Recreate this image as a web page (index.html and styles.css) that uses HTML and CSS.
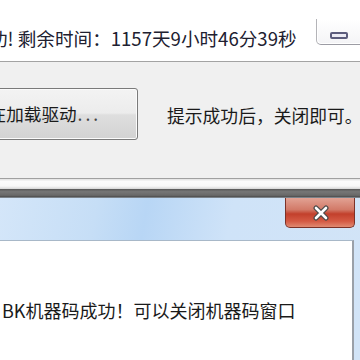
FILE: index.html
```html
<!DOCTYPE html>
<html lang="zh-CN">
<head>
<meta charset="utf-8">
<title>驱动加载</title>
<link rel="stylesheet" href="styles.css">
</head>
<body>
<div class="screen">
  <div class="top">
    <div class="countdown">功! 剩余时间：1157天9小时46分39秒</div>
    <div class="min-btn"><span class="min-glyph"></span></div>
  </div>
  <div class="main">
    <div class="load-btn">正在加载驱动<span class="dots">...</span></div>
    <div class="hint">提示成功后，关闭即可。</div>
  </div>
  <div class="frame-edge">
    <div class="edge-line"></div>
    <div class="edge-light"></div>
    <div class="edge-dark"></div>
  </div>
  <div class="dialog">
    <div class="dialog-title">
      <div class="close-btn">
        <svg width="20" height="16" viewBox="0 0 20 16">
          <path d="M5 3 L15 13 M15 3 L5 13" stroke="#4a4a4a" stroke-width="5" stroke-linecap="round"/>
          <path d="M5 3 L15 13 M15 3 L5 13" stroke="#ffffff" stroke-width="2.6" stroke-linecap="round"/>
        </svg>
      </div>
    </div>
    <div class="dialog-body">
      <div class="message">BK机器码成功！可以关闭机器码窗口</div>
    </div>
  </div>
</div>
</body>
</html>
```

FILE: styles.css
```css
html, body {
  margin: 0;
  padding: 0;
  background: #ffffff;
}

.screen {
  width: 360px;
  height: 360px;
  overflow: hidden;
  font-family: "Noto Sans CJK SC", "Microsoft YaHei", sans-serif;
  color: #1c1c1c;
}

.top {
  height: 61px;
  background: #ffffff;
  border-bottom: 1px solid #a3a3a3;
  display: flex;
  align-items: flex-start;
  overflow: hidden;
}

.countdown {
  flex-shrink: 0;
  margin-left: -11px;
  margin-top: 26px;
  font-size: 18.6px;
  line-height: 24px;
  white-space: nowrap;
  color: #202030;
}

.min-btn {
  flex-shrink: 0;
  margin-left: auto;
  margin-right: -10px;
  margin-top: 19px;
  width: 54px;
  height: 26px;
  box-sizing: border-box;
  border-left: 1px solid #b4b4b8;
  border-bottom: 1px solid #9c9ca4;
  border-bottom-left-radius: 5px;
  background: linear-gradient(#ffffff, #f4f4f6);
  box-shadow: inset 1px -1px 0 #ffffff;
  display: flex;
  padding-left: 13px;
  padding-top: 13px;
}

.min-glyph {
  display: block;
  width: 18px;
  height: 7px;
  box-sizing: border-box;
  border: 2px solid #5c5c7c;
  border-radius: 2px;
  background: #ecebf4;
}

.main {
  height: 116px;
  background: #f0f0f0;
  box-sizing: border-box;
  padding-top: 26px;
  display: flex;
  align-items: flex-start;
  overflow: hidden;
}

.load-btn {
  flex-shrink: 0;
  margin-left: -60px;
  width: 198px;
  height: 52px;
  box-sizing: border-box;
  border: 1px solid #7a7a7a;
  border-radius: 3px;
  background: linear-gradient(#f3f3f3 0%, #ececec 48%, #dedede 52%, #d2d2d2 100%);
  box-shadow: inset 0 0 0 1px #fbfbfb;
  font-size: 17.6px;
  line-height: 50px;
  padding-left: 30px;
  white-space: nowrap;
  color: #1a1a1a;
}

.dots {
  letter-spacing: 3px;
  margin-left: 1px;
  color: #444444;
}

.hint {
  flex-shrink: 0;
  margin-left: 29px;
  margin-top: 15px;
  font-size: 17.8px;
  line-height: 24px;
  white-space: nowrap;
  color: #1a1a1a;
}

.frame-edge {
  display: flex;
  flex-direction: column;
}

.edge-line {
  height: 1px;
  background: #a0a0a0;
}

.edge-light {
  height: 10px;
  background: linear-gradient(#e2e2e2 0%, #fbfbfb 25%, #f8f8f8 70%, #d6d6d6 100%);
}

.edge-dark {
  height: 9px;
  background: linear-gradient(#585858 0%, #767676 30%, #686868 70%, #4a4a4a 90%, #b8c8d8 100%);
}

.dialog {
  background: linear-gradient(100deg, #d4e6f9 0%, #c6def6 25%, #b8d6f5 38%, #cfe3f8 60%, #d2e4f7 100%);
}

.dialog-title {
  height: 42px;
  display: flex;
  justify-content: flex-end;
  align-items: flex-start;
  padding-right: 5px;
}

.close-btn {
  width: 70px;
  height: 30px;
  box-sizing: border-box;
  border: 1px solid #7c3228;
  border-top: none;
  border-radius: 0 0 5px 5px;
  background: linear-gradient(#e2a294 0%, #d27a68 40%, #c2402c 55%, #d45a44 80%, #e08a72 100%);
  display: flex;
  align-items: center;
  justify-content: center;
  padding-left: 2px;
}

.dialog-body {
  margin-left: -10px;
  margin-right: 6px;
  height: 130px;
  background: #ffffff;
  border-top: 1px solid #a8b8c8;
  border-right: 2px solid #9aa0a8;
}

.message {
  margin-top: 57px;
  margin-left: 12px;
  font-size: 18px;
  line-height: 24px;
  white-space: nowrap;
  color: #1a1a1a;
}
```
